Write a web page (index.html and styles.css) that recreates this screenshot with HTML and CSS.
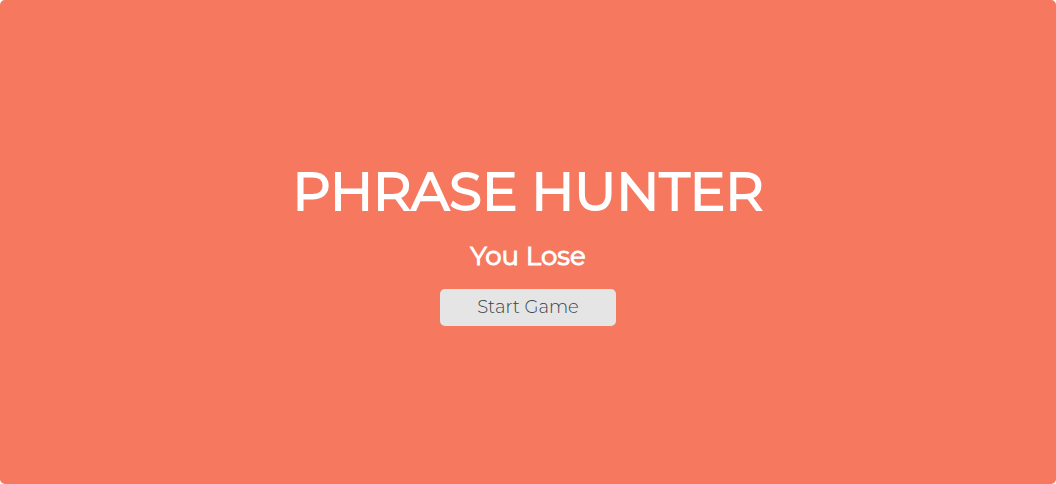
FILE: index.html
```
<!DOCTYPE html>
<html lang="en">
<head>
<meta charset="utf-8">
<meta name="viewport" content="width=device-width, initial-scale=1">
<title>Phrase Hunter</title>
<link rel="stylesheet" href="styles.css">
</head>
<body>
<main class="overlay">
<h1 class="title">Phrase Hunter</h1>
<h2 class="message">You Lose</h2>
<button class="start-button" type="button">Start Game</button>
</main>
</body>
</html>
```
FILE: styles.css
```
*, *::before, *::after { box-sizing: border-box; }
body {
  margin: 0;
  background: #fff;
  font-family: Montserrat, Inter, "Open Sans", sans-serif;
}
.overlay {
  min-height: 100vh;
  display: flex;
  flex-direction: column;
  align-items: center;
  justify-content: center;
  padding: 16px 16px 18px;
  border-radius: 5px;
  background: #f5785f;
  color: #fff;
  text-align: center;
}
.title {
  margin: 0 0 14px;
  font-size: 53px;
  line-height: 68px;
  font-weight: 400;
  text-transform: uppercase;
  -webkit-text-stroke: 2px #fff;
}
.message {
  margin: 0 0 16px;
  font-size: 26px;
  line-height: 34px;
  font-weight: 400;
  -webkit-text-stroke: 1px #fff;
}
.start-button {
  width: 176px;
  height: 37px;
  padding: 0;
  border: 0;
  border-radius: 5px;
  background: #e5e5e5;
  color: #37414b;
  font: inherit;
  font-size: 18px;
  font-weight: 300;
  cursor: pointer;
}
```
